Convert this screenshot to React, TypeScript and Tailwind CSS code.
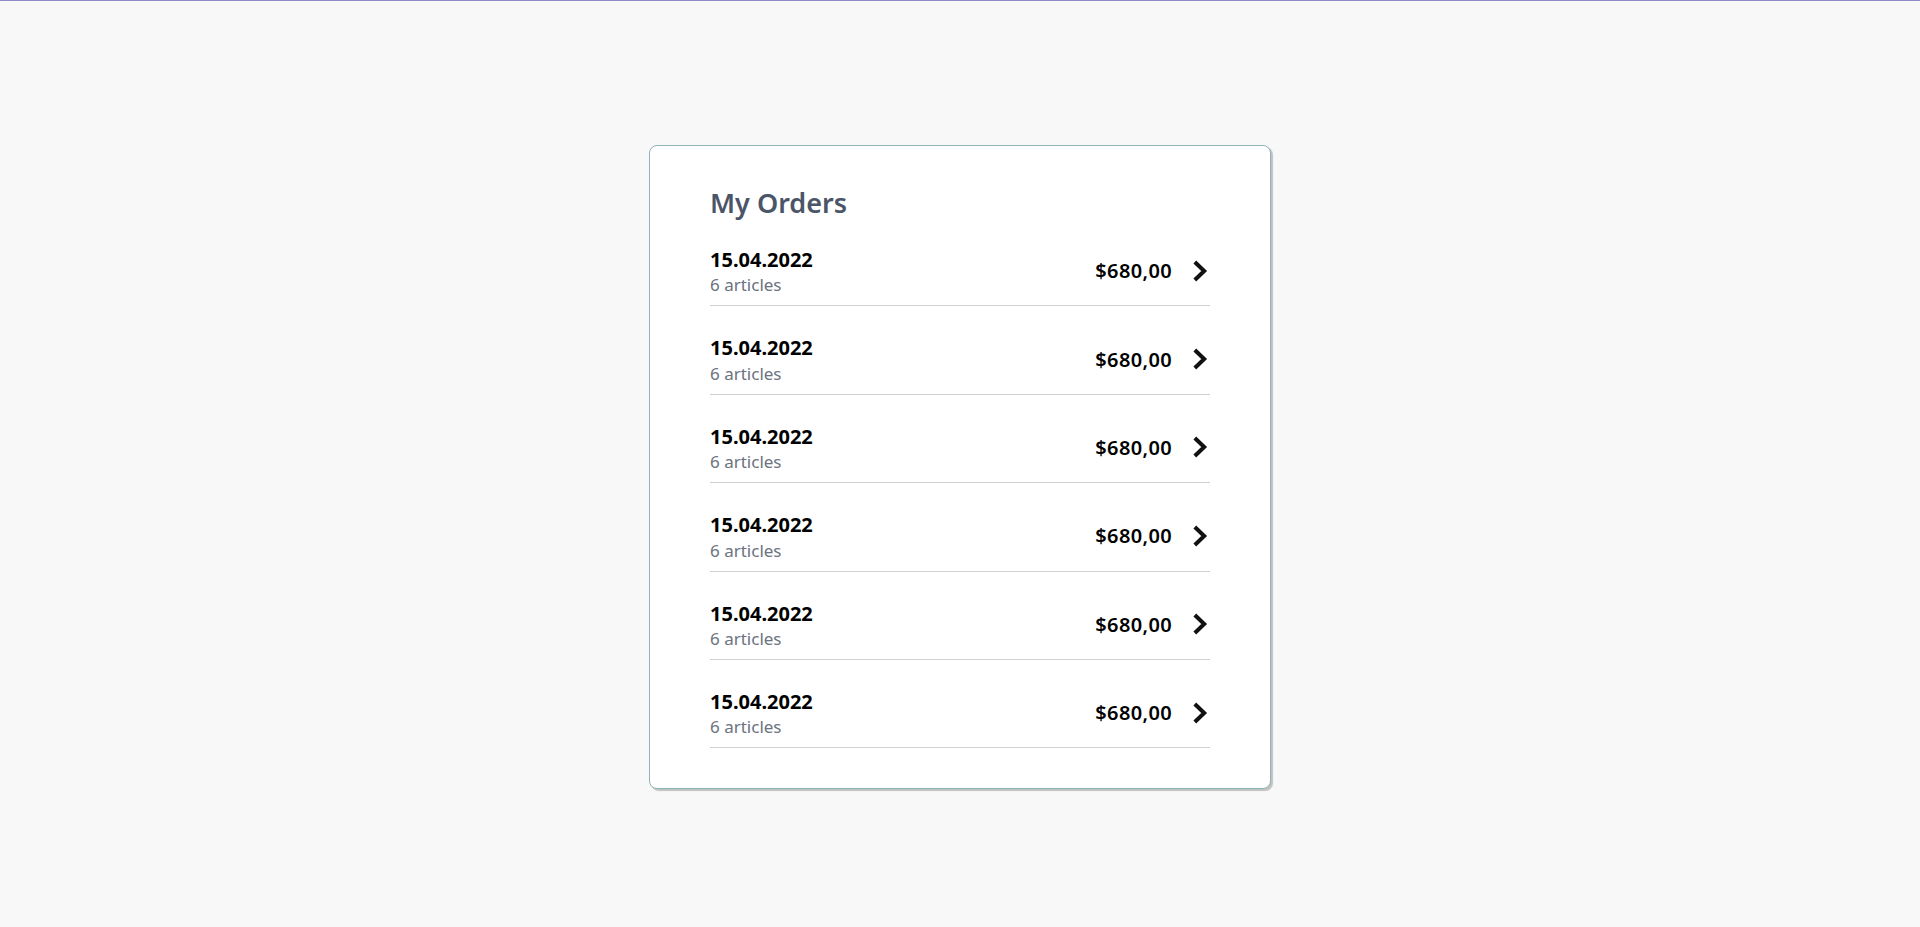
import React from "react";

const orders = Array.from({ length: 6 }, () => ({
  date: "15.04.2022",
  articles: "6 articles",
  price: "$680,00",
}));

function Chevron() {
  return (
    <svg width="17" height="22" viewBox="0 0 17 22" className="block">
      <path d="M1.8 2 L11.2 11 L1.8 20" fill="none" stroke="#111111" strokeWidth="4" strokeLinejoin="miter" />
    </svg>
  );
}

export default function App() {
  return (
    <div
      className="min-h-[927px] w-full bg-[#f8f8f8] border-t border-[#8e89c8] pt-[144px]"
      style={{ fontFamily: '"Noto Sans", "Open Sans", sans-serif' }}
    >
      <div className="mx-auto w-[622px] rounded-[8px] border border-[#8db4b6] bg-white shadow-[2px_2px_1px_rgba(0,0,0,0.22)] px-[60px] pt-[42px] pb-[40px]">
        <h1 className="text-[27px] leading-[30px] font-semibold text-[#4b5567]">My Orders</h1>
        <div>
          {orders.map((o, i) => (
            <div
              key={i}
              className="flex items-center justify-between border-b border-[#cfd2d4] pt-[29px] pb-[9px]"
            >
              <div>
                <div className="text-[20px] leading-[25px] font-bold text-black">{o.date}</div>
                <div className="text-[17px] leading-[22px] mt-[2.4px] text-[#6b7280]">{o.articles}</div>
              </div>
              <div className="flex items-center gap-[21px] pb-[2px]">
                <span className="text-[20px] leading-[25px] font-semibold tracking-[0.35px] text-black">{o.price}</span>
                <Chevron />
              </div>
            </div>
          ))}
        </div>
      </div>
    </div>
  );
}
